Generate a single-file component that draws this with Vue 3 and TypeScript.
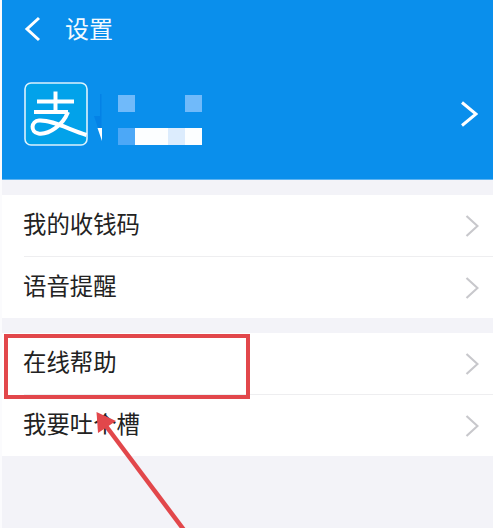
<script setup lang="ts">
const groups: string[][] = [
  ['我的收钱码', '语音提醒'],
  ['在线帮助', '我要吐个槽'],
]
const cells: string[] = ['a', '', '', '', 'a', '', '', '', '', '', 'b', 'w', 'w', 'p', 'w']
</script>

<template>
  <div class="page">
    <div class="main">
      <header class="hero">
        <div class="nav">
          <svg class="back" width="18" height="26" viewBox="0 0 18 26">
            <path d="M15 2 L3 13 L15 24" fill="none" stroke="#fff" stroke-width="3" />
          </svg>
          <span class="title">设置</span>
        </div>
        <div class="profile">
          <svg class="logo" width="64" height="64" viewBox="0 0 64 64">
            <rect x="1" y="1" width="62" height="62" rx="6" fill="#02a2ea" stroke="#dcf2fd" stroke-width="1.6" />
            <g fill="none" stroke="#fff" stroke-width="4">
              <path d="M13 19.5 H50" />
              <path d="M31.5 9.5 V29" />
              <path d="M10 30 H44" />
              <path d="M44 30 C39 43 25 53 14.5 51.5 C6 50 7 39 15 38.5 C27 37.5 44 47 62.5 53" />
            </g>
          </svg>
          <svg class="sliver" width="30" height="64" viewBox="0 0 30 64">
            <path d="M12 12 H13.5 V34 H12 Z M6 34 L13.5 34 L13.5 46 L10 46 Z" fill="#0482e6" />
            <path d="M9.5 46 L14 46 L14 59 Z" fill="#fff" />
          </svg>
          <div class="mosaic">
            <i v-for="(c, i) in cells" :key="i" :class="c" />
          </div>
          <svg class="go" width="18" height="26" viewBox="0 0 18 26">
            <path d="M2 1.5 L16 13 L2 24.5" fill="none" stroke="#fff" stroke-width="3" />
          </svg>
        </div>
      </header>

      <section v-for="(g, gi) in groups" :key="gi" class="group">
        <div v-for="t in g" :key="t" class="row">
          <span class="label">{{ t }}</span>
          <svg width="14" height="24" viewBox="0 0 14 24">
            <path d="M1.5 2 L12.5 12 L1.5 22" fill="none" stroke="#c8c8cc" stroke-width="2.2" />
          </svg>
        </div>
      </section>
    </div>

    <div class="mark"></div>
    <svg class="arrow" width="493" height="528" viewBox="0 0 493 528">
      <path d="M184 530 L100 418" fill="none" stroke="#e2474b" stroke-width="4.5" />
      <path d="M96.5 412 L116 421 L98 433 Z" fill="#e2474b" />
    </svg>
  </div>
</template>

<style>
html, body { margin: 0; background: #fff; }
</style>

<style scoped>
.page {
  position: relative;
  width: 493px;
  height: 528px;
  overflow: hidden;
  padding-left: 2px;
  box-sizing: border-box;
  background: #fbfbfd;
  font-family: "Noto Sans CJK SC", "Liberation Sans", sans-serif;
}
.main {
  height: 100%;
  background: #f3f3f8;
}
.hero {
  box-sizing: border-box;
  height: 180px;
  padding: 0 15px 0 22px;
  background: #0a8fec;
  border-bottom: 1px solid #5fb4f1;
  color: #fff;
}
.nav {
  height: 58px;
  display: flex;
  align-items: center;
  gap: 23px;
}
.title {
  font-size: 24px;
  line-height: 1;
  margin-bottom: 3px;
  color: #f4faff;
}
.profile {
  margin-top: 24px;
  display: flex;
  align-items: center;
}
.logo, .sliver { flex: none; }
.mosaic {
  margin-top: 12px;
  display: grid;
  grid-template-columns: repeat(5, 16.8px);
  grid-template-rows: repeat(3, 16.5px);
}
.mosaic .a { background: #70bafa; }
.mosaic .b { background: #4ca8f7; }
.mosaic .w { background: #fcfeff; }
.mosaic .p { background: #dcecfd; }
.go { margin-left: auto; }
.group {
  margin-top: 15px;
  background: #fff;
}
.row {
  height: 61px;
  display: flex;
  align-items: center;
  justify-content: space-between;
  margin-left: 22px;
  padding-right: 14px;
  font-size: 23.4px;
  color: #222;
}
.label {
  margin-top: -5px;
  margin-left: -1px;
}
.row + .row { border-top: 1px solid #eeeef0; }
.mark {
  position: absolute;
  left: 4px;
  top: 334px;
  width: 246px;
  height: 65px;
  box-sizing: border-box;
  border: 4px solid #e2474b;
}
.arrow {
  position: absolute;
  left: 0;
  top: 0;
}
</style>
